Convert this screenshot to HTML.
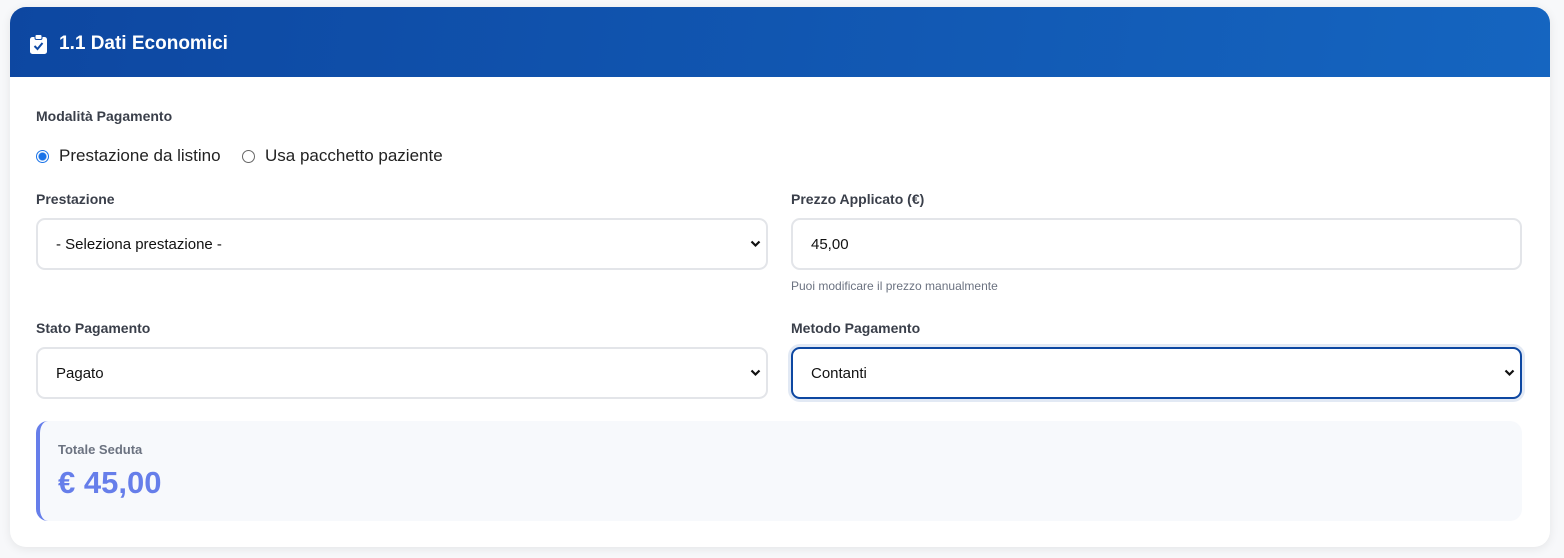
<!DOCTYPE html>
<html><head><style>
*{box-sizing:border-box;margin:0;padding:0}
body{width:1564px;height:558px;background:#f7f8fa;font-family:"Liberation Sans",sans-serif;position:relative;overflow:hidden}
.card{position:absolute;left:10px;top:7px;width:1540px;height:540px;background:#fff;border-radius:16px;box-shadow:0 2px 10px rgba(0,0,0,.08);overflow:hidden}
.hd{height:70px;background:linear-gradient(100deg,#0d47a1,#1565c0);color:#fff;display:flex;align-items:center;padding-left:20px;padding-top:4px;font-size:19px;font-weight:bold}
.hd svg{margin-right:12px}
.lbl{position:absolute;font-size:14px;font-weight:bold;color:#3a3f4a}
.box{position:absolute;height:52px;border:2px solid #e3e5e9;border-radius:9px;background:#fff;font-size:15px;color:#111;padding-left:18px;line-height:50px}
.box svg{position:absolute;right:5px;top:20px}
.radio{position:absolute;top:139px;font-size:17px;color:#222;display:flex;align-items:center}
.dot{width:13px;height:13px;border-radius:50%;border:1px solid #666;margin-right:10px;display:inline-block}
.dot.on{border:1px solid #1a73e8;background:radial-gradient(circle,#1a73e8 0 3.5px,#fff 4.5px)}
</style></head><body>
<div class="card">
<div class="hd"><svg width="17" height="20" viewBox="0 0 17 20"><rect x="0" y="3" width="17" height="17" rx="2.5" fill="#fff"/><rect x="5" y="0.5" width="7" height="5" rx="1.5" fill="#fff" stroke="#0f4aa5" stroke-width="1"/><path d="M4.5 12l3 3 5-6" stroke="#0f4aa5" stroke-width="2" fill="none"/></svg>1.1 Dati Economici</div>
<div class="lbl" style="left:26px;top:101px">Modalità Pagamento</div>
<div class="radio" style="left:26px"><span class="dot on"></span>Prestazione da listino</div>
<div class="radio" style="left:232px"><span class="dot"></span>Usa pacchetto paziente</div>
<div class="lbl" style="left:26px;top:184px">Prestazione</div>
<div class="box" style="left:26px;top:211px;width:732px">- Seleziona prestazione -<svg width="11" height="8" viewBox="0 0 11 8"><path d="M1.5 1.5l4 4 4-4" stroke="#111" stroke-width="2.2" fill="none"/></svg></div>
<div class="lbl" style="left:781px;top:184px">Prezzo Applicato (€)</div>
<div class="box" style="left:781px;top:211px;width:731px">45,00</div>
<div style="position:absolute;left:781px;top:272px;font-size:12px;color:#6b7280">Puoi modificare il prezzo manualmente</div>
<div class="lbl" style="left:26px;top:313px">Stato Pagamento</div>
<div class="box" style="left:26px;top:340px;width:732px">Pagato<svg width="11" height="8" viewBox="0 0 11 8"><path d="M1.5 1.5l4 4 4-4" stroke="#111" stroke-width="2.2" fill="none"/></svg></div>
<div class="lbl" style="left:781px;top:313px">Metodo Pagamento</div>
<div class="box" style="left:781px;top:340px;width:731px;border-color:#0d47a1;box-shadow:0 0 0 3px rgba(13,71,161,.12)">Contanti<svg width="11" height="8" viewBox="0 0 11 8"><path d="M1.5 1.5l4 4 4-4" stroke="#111" stroke-width="2.2" fill="none"/></svg></div>
<div style="position:absolute;left:26px;top:414px;width:1486px;height:100px;background:#f7f9fc;border-left:4px solid #667eea;border-radius:12px">
<div style="position:absolute;left:18px;top:21px;font-size:13px;font-weight:bold;color:#6b7280">Totale Seduta</div>
<div style="position:absolute;left:18px;top:44px;font-size:31px;font-weight:bold;color:#667eea">€ 45,00</div>
</div>
</div>
</body></html>
